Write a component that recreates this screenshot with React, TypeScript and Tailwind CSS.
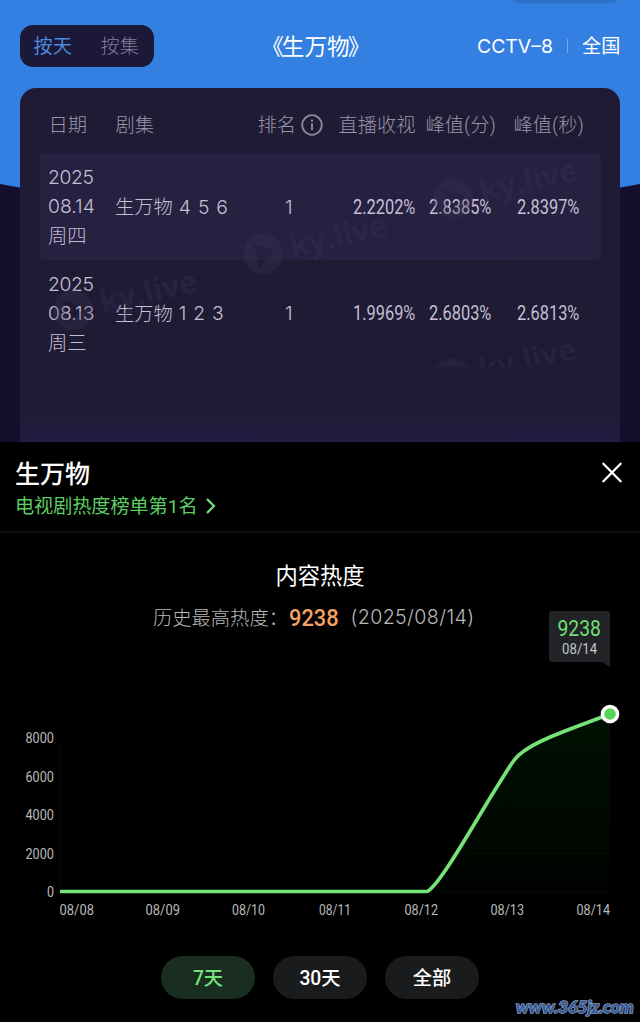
import React from "react";

const cjk = "font-['Roboto','Noto_Sans_CJK_SC',sans-serif]";

type Rating = {
  year: string;
  day: string;
  week: string;
  title: string;
  rank: string;
  live: string;
  peakMin: string;
  peakSec: string;
};

const ratings: Rating[] = [
  { year: "2025", day: "08.14", week: "周四", title: "4 5 6", rank: "1", live: "2.2202%", peakMin: "2.8385%", peakSec: "2.8397%" },
  { year: "2025", day: "08.13", week: "周三", title: "1 2 3", rank: "1", live: "1.9969%", peakMin: "2.6803%", peakSec: "2.6813%" },
];

const yTicks = [
  { label: "8000", y: 738, x: 25.5, w: 28.5 },
  { label: "6000", y: 776.5, x: 25.5, w: 28.5 },
  { label: "4000", y: 815, x: 25.5, w: 28.5 },
  { label: "2000", y: 853.5, x: 25.5, w: 28.5 },
  { label: "0", y: 892, x: 47, w: 7 },
];

const xTicks = [
  { label: "08/08", x: 59.5, w: 34.5 },
  { label: "08/09", x: 145.5, w: 34.5 },
  { label: "08/10", x: 232, w: 33 },
  { label: "08/11", x: 319, w: 32 },
  { label: "08/12", x: 404.5, w: 33.5 },
  { label: "08/13", x: 490.5, w: 33.5 },
  { label: "08/14", x: 576.5, w: 33.5 },
];

function Percent({ children }: { children: string }) {
  return (
    <span className="block w-[62px] pt-[2px] whitespace-nowrap">
      <span className="inline-block origin-left scale-x-[0.84] text-[19.5px] font-normal">{children}</span>
    </span>
  );
}

function Backdrop() {
  return (
    <svg className="absolute inset-0" width="640" height="442" viewBox="0 0 640 442">
      <rect width="640" height="442" fill="#130f2d" />
      <path d="M0 0H640V184Q320 245 0 184Z" fill="#3380e2" />
      <rect x="512" y="-20" width="107" height="23.5" rx="8" fill="#2c71c8" />
    </svg>
  );
}

function Mark({ x, y }: { x: number; y: number }) {
  return (
    <g transform={`translate(${x} ${y}) rotate(-13)`} fill="#3a3554" opacity="0.3">
      <path fillRule="evenodd" d="M0 -20A20 20 0 1 1 0 20A20 20 0 1 1 0 -20ZM-7 -12V12L12 0Z" />
      <text x="28" y="10" fontFamily="Open Sans, sans-serif" fontWeight="700" fontSize="31" textLength="99" lengthAdjust="spacingAndGlyphs">
        ky.live
      </text>
    </g>
  );
}

function Ratings() {
  return (
    <section className="relative h-[442px] overflow-hidden">
      <Backdrop />
      <div className="relative flex h-[88px] items-start pt-[25px]">
        <div className="ml-5 flex h-[42px] w-[134px] items-center rounded-[13px] bg-[#1b1838] pt-[3px] pl-[13.5px] text-[19.2px] font-light">
          <span className="w-[67px] font-normal text-[#4b8bdd]">按天</span>
          <span className="text-[#817d98]">按集</span>
        </div>
        <h1 className="ml-[104.5px] flex h-[42px] w-[114.5px] justify-center pt-[2px] text-[22.6px] leading-[41px] text-white">
          <span className="-mr-[2px]">《</span>
          <span>生万物</span>
          <span className="-ml-[2px]">》</span>
        </h1>
        <div className="ml-[104px] flex h-[42px] items-center text-[19.2px] text-white">
          <span className="w-[77px] whitespace-nowrap font-['Inter','Noto_Sans_CJK_SC',sans-serif] text-[19.2px]">
            <span className="inline-block origin-left scale-x-[1.01]">CCTV–8</span>
          </span>
          <span className="ml-[13px] h-[14px] w-px bg-[#79aaeb]" />
          <span className="ml-[14px] pt-[3px]">全国</span>
        </div>
      </div>
      <div className="relative mx-5 h-[354px] overflow-hidden rounded-t-[16px] bg-gradient-to-b from-[#1f1b34] from-90% to-[#231b42]">
        <div className="grid h-[65px] grid-cols-[67px_142px_81px_87px_88px_auto] items-center pt-[11px] pl-[28.5px] text-[19.3px] font-light text-[#9894a9]">
          <span>日期</span>
          <span>剧集</span>
          <span className="flex items-center gap-[5px]">
            排名
            <svg className="-mt-[3px]" width="22" height="22" viewBox="0 0 22 22" fill="none" stroke="#8d899e" strokeWidth="1.8">
              <circle cx="11" cy="11" r="9.8" />
              <path d="M11 9.4V16.2M11 5.8V7.8" strokeWidth="2" />
            </svg>
          </span>
          <span>直播收视</span>
          <span className="whitespace-nowrap">峰值(分)</span>
          <span className="whitespace-nowrap">峰值(秒)</span>
        </div>
        {ratings.map((r, i) => (
          <div
            key={r.day}
            className={
              "mr-[19px] ml-5 grid h-[106.5px] grid-cols-[67px_170px_68px_75.5px_88px_auto] items-center rounded-[4px] pl-2 text-[19px] text-[#c4bfd4] " +
              (i === 0 ? "bg-[#262141]" : "")
            }
          >
            <span className="flex flex-col pt-[2px] font-['Inter','Noto_Sans_CJK_SC',sans-serif] leading-[29px] font-light">
              <span className="text-[19.3px] tracking-[-0.4px]">{r.year}</span>
              <span className="text-[19.3px] tracking-[0px]">{r.day}</span>
              <span className="pt-px text-[19.3px]">{r.week}</span>
            </span>
            <span className="flex items-center gap-[6px] font-['Inter','Noto_Sans_CJK_SC',sans-serif] font-light">
              <span className="pt-[3px] text-[19.3px]">生万物</span>
              <span className="pt-[2px] text-[19.3px] [word-spacing:1.5px]">{r.title}</span>
            </span>
            <span className="pt-[2px] font-['Inter',sans-serif] text-[19.3px] font-light">{r.rank}</span>
            <Percent>{r.live}</Percent>
            <Percent>{r.peakMin}</Percent>
            <Percent>{r.peakSec}</Percent>
          </div>
        ))}
        <svg className="pointer-events-none absolute inset-0" width="600" height="354" viewBox="0 0 600 354">
          <Mark x={243} y={166} />
          <Mark x={433} y={111} />
          <Mark x={53} y={222} />
          <clipPath id="fade">
            <path d="M400 230H600V268L500 279H400Z" />
          </clipPath>
          <g clipPath="url(#fade)">
            <Mark x={432} y={290} />
          </g>
        </svg>
      </div>
    </section>
  );
}

function HeatChart() {
  return (
    <svg className="block" width="640" height="264" viewBox="0 662 640 264">
      <defs>
        <linearGradient id="area" x1="0" y1="0" x2="0" y2="1">
          <stop offset="0" stopColor="#001203" />
          <stop offset="1" stopColor="#000200" />
        </linearGradient>
      </defs>
      <path d="M60 745V890" stroke="#0c0c0c" />
      <path d="M427 892C440 886 478 816 500 782C513 761 516 756 524 751C542 738 574 728 610 714V892Z" fill="url(#area)" />
      <path d="M515 776.5H610M492 815H610M467 853.5H610M427 892H610" stroke="#070d07" strokeWidth="1" />
      <path
        d="M60 891.5H427C440 886 478 816 500 782C513 761 516 756 524 751C542 738 574 728 610 714"
        fill="none"
        stroke="#76e277"
        strokeWidth="3.7"
        strokeLinejoin="round"
      />
      <circle cx="610" cy="714" r="9.3" fill="#fff" />
      <circle cx="610" cy="714" r="5.8" fill="#55d557" />
      <g fill="#b9b9b9" fontFamily="Roboto, sans-serif" fontSize="14">
        {yTicks.map((t) => (
          <text key={t.label} x={t.x} y={t.y + 5} textLength={t.w} lengthAdjust="spacingAndGlyphs">
            {t.label}
          </text>
        ))}
        {xTicks.map((t) => (
          <text key={t.label} x={t.x} y={914.5} textLength={t.w} lengthAdjust="spacingAndGlyphs">
            {t.label}
          </text>
        ))}
      </g>
    </svg>
  );
}

function HeatPanel() {
  return (
    <section className="relative flex h-[580px] flex-col bg-black">
      <header className="flex h-[91px] justify-between border-b-2 border-[#101010] px-4 pt-[15px]">
        <div>
          <h2 className="-ml-px text-[25px] leading-[35px] font-medium text-white">生万物</h2>
          <a className="-ml-px flex items-center gap-[9px] text-[19.2px] leading-[30px] text-[#5bcd61]">
            <span className="tracking-[-0.1px]">电视剧热度榜单第1名</span>
            <svg className="-mt-[2px]" width="10" height="16" viewBox="0 0 10 16" fill="none" stroke="#76df7a" strokeWidth="2.2">
              <path d="M1 1L8 8L1 15" />
            </svg>
          </a>
        </div>
        <svg className="mt-[5px] mr-[2px]" width="20" height="21" viewBox="0 0 20 21" stroke="#fff" strokeWidth="2.3" strokeLinecap="round">
          <path d="M1.4 1.8L18.6 19.2M18.6 1.8L1.4 19.2" />
        </svg>
      </header>
      <h3 className="mt-[27px] text-center text-[22.3px] leading-[32px] text-white">内容热度</h3>
      <div className="mt-[10px] ml-[153px] flex h-[32px] items-center text-[19.3px] font-light text-[#b8b8b8]">
        <span className="w-[136px] pt-[2px] whitespace-nowrap">历史最高热度：</span>
        <span className="w-[61.5px] pt-px">
          <span className="inline-block origin-left scale-x-[0.92] text-[23.7px] font-medium text-[#f5a161]">9238</span>
        </span>
        <span className="whitespace-nowrap font-['Inter',sans-serif] text-[19.6px] tracking-[0.4px]">(2025/08/14)</span>
      </div>
      <div className="relative -mt-[23px] ml-[549px] flex h-[51px] w-[61px] flex-col items-center rounded-[3px] bg-[#212326] pt-[4px]">
        <span className="origin-center scale-x-[0.9] text-[21.5px] leading-[28px] text-[#71df73]">9238</span>
        <span className="origin-center scale-x-[0.94] pt-px text-[14px] leading-[11px] text-[#c5c5c5]">08/14</span>
        <svg className="absolute top-[50px] right-0" width="10" height="6" viewBox="0 0 10 6">
          <path d="M0 0H10V6Z" fill="#212326" />
        </svg>
      </div>
      <HeatChart />
      <div className="mt-[30px] flex justify-center gap-[18px] text-[19.3px] font-medium text-white">
        <button className="flex h-[43px] w-[94px] items-center justify-center rounded-full bg-[#192e20] pt-[3px] text-[#75e37b]">7天</button>
        <button className="flex h-[43px] w-[94px] items-center justify-center rounded-full bg-[#1a1b1d] pt-[3px]">30天</button>
        <button className="flex h-[43px] w-[94px] items-center justify-center rounded-full bg-[#1a1b1d] pt-[3px]">全部</button>
      </div>
      <div className="absolute right-[6px] bottom-[4px] flex h-[22px] w-[118px] items-center font-['Lato',sans-serif] text-[17.5px] font-bold whitespace-nowrap text-[#2f579d] italic [paint-order:stroke_fill] [-webkit-text-stroke:1.6px_#8d9bb5]">
        <span className="tracking-[-0.1px]">www.365jz.com</span>
      </div>
    </section>
  );
}

export default function App() {
  return (
    <main className={`h-[1022px] w-[640px] overflow-hidden bg-black ${cjk}`}>
      <Ratings />
      <HeatPanel />
    </main>
  );
}
